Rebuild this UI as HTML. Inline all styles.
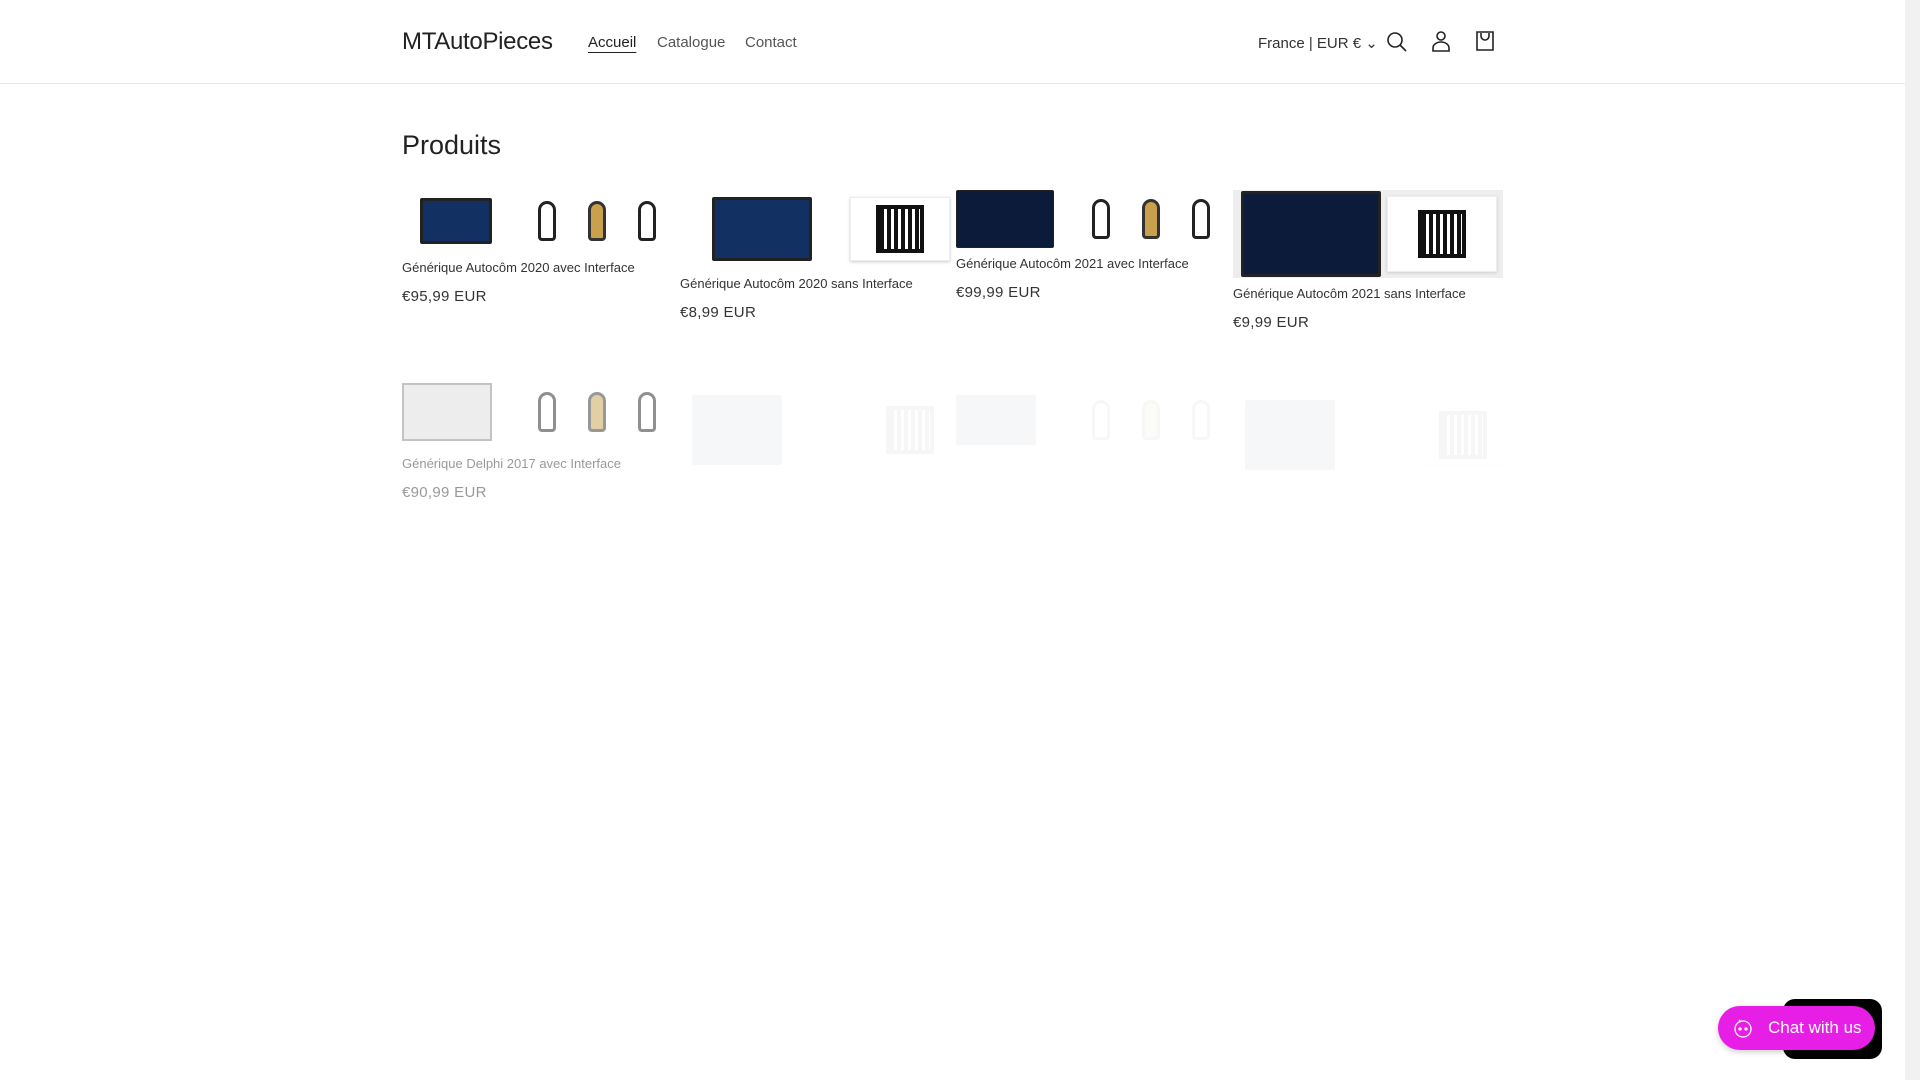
<!DOCTYPE html>
<html><head><meta charset="utf-8"><style>
*{margin:0;padding:0;box-sizing:border-box}
body{width:1920px;height:1080px;overflow:hidden;background:#fff;font-family:"Liberation Sans",sans-serif;color:#121212;position:relative}
.hdr{position:absolute;left:0;top:0;width:1905px;height:84px;border-bottom:1px solid #e6e6e6}
.logo{position:absolute;left:402px;top:28px;font-size:24px;color:#222;letter-spacing:-0.3px}
.nav{position:absolute;top:34px;font-size:15px;color:#555}
.sb{position:absolute;right:0;top:0;width:15px;height:1080px;background:#f1f1f1}
h1{position:absolute;left:402px;top:130px;font-size:27px;font-weight:normal;color:#222}
.card{position:absolute;width:270px}
.img{display:flex;align-items:center;justify-content:space-between}
.lap{background:#123062;border:3px solid #222;border-radius:2px}
.qr{background:#fff;border:1px solid #eee;box-shadow:0 1px 3px #ccc;display:flex;align-items:center;justify-content:center}
.qr i{display:block;width:40px;height:40px;background:repeating-linear-gradient(90deg,#111 0 4px,#fff 4px 7px),#111;outline:4px solid #111}
.t{font-size:13px;color:#333;margin-top:8px}
.p{font-size:15px;color:#333;margin-top:13px;letter-spacing:0.3px}
.cab{width:150px;height:60px;display:flex;justify-content:space-around;align-items:center}
.cab b{display:block;width:18px;height:40px;border:3px solid #222;border-radius:9px 9px 4px 4px}
.cab b:nth-child(2){background:#c9a04c;border-color:#333}
</style></head><body>
<div class="hdr">
<div class="logo">MTAutoPieces</div>
<div class="nav" style="left:588px;color:#222;text-decoration:underline;text-underline-offset:5px">Accueil</div>
<div class="nav" style="left:657px">Catalogue</div>
<div class="nav" style="left:745px">Contact</div>
<div class="nav" style="left:1258px;color:#333">France | EUR € &#8964;</div>
<svg style="position:absolute;left:1385px;top:30px" width="24" height="24" viewBox="0 0 24 24" fill="none" stroke="#222" stroke-width="1.6"><circle cx="10" cy="10" r="7"/><path d="M15 15l6 6"/></svg>
<svg style="position:absolute;left:1430px;top:29px" width="22" height="24" viewBox="0 0 22 24" fill="none" stroke="#222" stroke-width="1.6"><circle cx="11" cy="7" r="4"/><path d="M3 22v-3a8 6 0 0 1 16 0v3z"/></svg>
<svg style="position:absolute;left:1474px;top:29px" width="22" height="24" viewBox="0 0 22 24" fill="none" stroke="#222" stroke-width="1.6"><path d="M3 3h16v18H3z"/><path d="M7 4v3a4 4 0 0 0 8 0V4"/></svg>
</div>
<h1>Produits</h1>

<div class="card" style="left:402px;top:190px"><div class="img" style="height:62px"><div class="lap" style="width:72px;height:46px;margin-left:18px"></div><div class="cab"><b></b><b></b><b></b></div></div><div class="t">Générique Autocôm 2020 avec Interface</div><div class="p">€95,99 EUR</div></div>
<div class="card" style="left:680px;top:190px"><div class="img" style="height:78px"><div class="lap" style="width:100px;height:64px;margin-left:32px"></div><div class="qr" style="width:100px;height:64px"><i></i></div></div><div class="t">Générique Autocôm 2020 sans Interface</div><div class="p">€8,99 EUR</div></div>
<div class="card" style="left:956px;top:190px"><div class="img" style="height:58px"><div class="lap" style="width:98px;height:58px;border-width:1px;background:#0d1b3a"></div><div class="cab"><b></b><b></b><b></b></div></div><div class="t">Générique Autocôm 2021 avec Interface</div><div class="p">€99,99 EUR</div></div>
<div class="card" style="left:1233px;top:190px"><div class="img" style="height:88px;background:#eee"><div class="lap" style="width:140px;height:86px;margin-left:8px;background:#0d1b3a"></div><div class="qr" style="width:110px;height:76px;margin-right:6px"><i></i></div></div><div class="t">Générique Autocôm 2021 sans Interface</div><div class="p">€9,99 EUR</div></div>

<div class="card" style="left:402px;top:382px;opacity:0.5"><div class="img" style="height:60px"><div style="width:90px;height:58px;background:#ddd;border:2px solid #888"></div><div class="cab"><b></b><b></b><b></b></div></div><div class="t" style="margin-top:14px">Générique Delphi 2017 avec Interface</div><div class="p">€90,99 EUR</div></div>
<div class="card" style="left:680px;top:390px;opacity:0.03"><div class="img" style="height:80px"><div class="lap" style="width:90px;height:70px;margin-left:12px"></div><div class="qr" style="width:80px;height:60px"><i></i></div></div></div>
<div class="card" style="left:956px;top:390px;opacity:0.03"><div class="img" style="height:60px"><div class="lap" style="width:80px;height:50px"></div><div class="cab"><b></b><b></b><b></b></div></div></div>
<div class="card" style="left:1233px;top:395px;opacity:0.03"><div class="img" style="height:80px"><div class="lap" style="width:90px;height:70px;margin-left:12px"></div><div class="qr" style="width:80px;height:60px"><i></i></div></div></div>

<div class="sb"></div>
<div style="position:absolute;left:1783px;top:999px;width:99px;height:60px;background:#000;border-radius:12px"></div>
<div style="position:absolute;left:1718px;top:1006px;width:157px;height:44px;background:#e61ee6;border-radius:22px;color:#fff;font-size:17px;line-height:44px;padding-left:50px;box-shadow:0 2px 6px rgba(0,0,0,.2)">Chat with us
<svg style="position:absolute;left:12px;top:10px" width="26" height="24" viewBox="0 0 26 24" fill="none" stroke="#fff" stroke-width="1.3"><circle cx="13" cy="13" r="8"/><circle cx="10" cy="13" r="1"/><circle cx="16" cy="13" r="1"/><path d="M9 4l2 2"/></svg></div>
</body></html>
